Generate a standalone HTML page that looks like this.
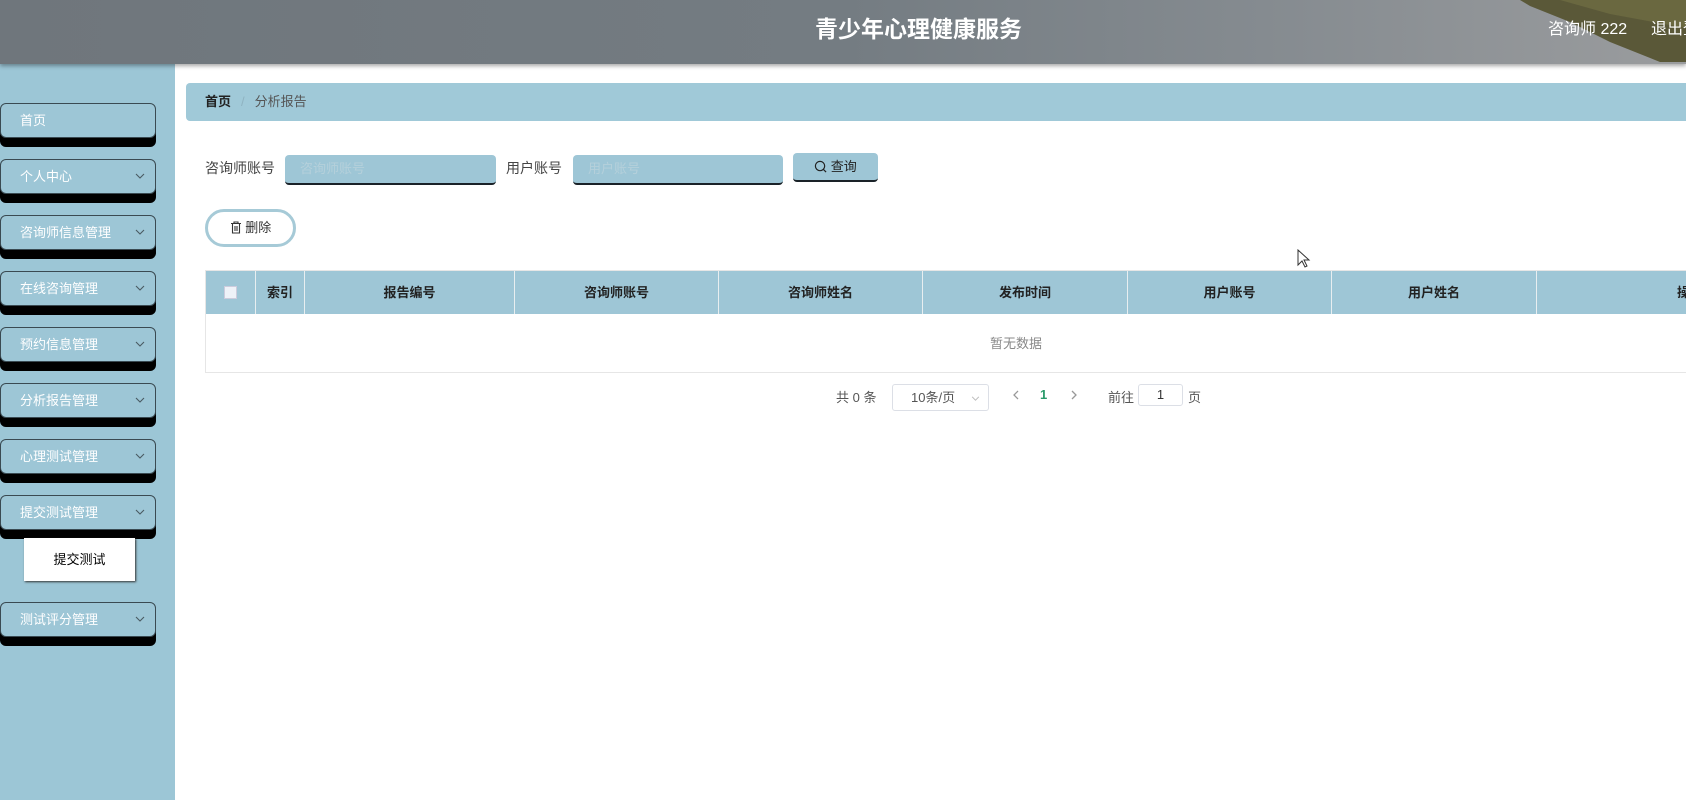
<!DOCTYPE html>
<html><head><meta charset="utf-8">
<style>
*{box-sizing:border-box;margin:0;padding:0}
body{width:1686px;height:800px;overflow:hidden;background:#fff;font-family:"Liberation Sans","Noto Sans CJK SC",sans-serif;font-size:13px;color:#333;position:relative}
.hdr{position:absolute;left:0;top:0;width:1686px;height:64px;background:linear-gradient(90deg,#6f767c 0%,#747c82 50%,#858b90 75%,#9a9c9e 100%);box-shadow:0 2px 4px rgba(0,0,0,.35);overflow:hidden;z-index:2}
.hdr .t{position:absolute;left:815px;top:10px;font-size:23px;font-weight:bold;color:#fff}
.hdr .u{position:absolute;left:1548px;top:15px;font-size:16px;color:#fff}
.hdr .o{position:absolute;left:1651px;top:15px;font-size:16px;color:#fff;white-space:nowrap}
.side{position:absolute;left:0;top:64px;width:175px;height:736px;background:#9cc6d6}
.mi{position:absolute;left:0;width:156px;height:35px;background:#9dc6d6;border:1px solid #3a4a52;border-radius:6px;box-shadow:0 9px 0 #000;color:#fff;font-size:13px;line-height:33px;padding-left:19px}
.mi svg{position:absolute;right:10px;top:13px}
.sub{position:absolute;left:24px;top:538px;width:111px;height:43px;background:#fff;box-shadow:1px 1px 2px #333;text-align:center;line-height:43px;font-size:13px;color:#000}
.bc{position:absolute;left:186px;top:83px;width:1500px;height:38px;background:#a0c9d8;border-radius:4px 0 0 4px;line-height:38px;padding-left:19px;font-size:13px}
.bc b{color:#222}.bc span{color:#8fb3c1;margin:0 10px}.bc i{font-style:normal;color:#555}
.lbl{position:absolute;top:158px;font-size:14px;color:#444}
.inp{position:absolute;top:155px;height:30px;background:#9ec6d6;border-radius:4px;border-bottom:2px solid #1a2228;color:#b5d0db;font-size:13px;line-height:28px;padding-left:15px}
.btnq{position:absolute;left:793px;top:153px;width:85px;height:29px;background:#9ec6d6;border-radius:4px;border-bottom:2px solid #1a2228;font-size:13px;line-height:28px;text-align:center;color:#222}
.del{position:absolute;left:205px;top:209px;width:91px;height:38px;border:3px solid #a6cad7;border-radius:20px;font-size:13px;line-height:32px;text-align:center;color:#333}
.tbl{position:absolute;left:205px;top:270px;width:1481px;height:103px;border:1px solid #e6e6e6;border-right:none;overflow:hidden}
.th{position:absolute;top:0;height:43px;background:#9ec6d6;border-right:1px solid #e8eef0;font-weight:bold;font-size:13px;color:#222;text-align:center;line-height:43px;white-space:nowrap}
.empty{position:absolute;left:0;top:43px;width:1620px;height:59px;line-height:59px;text-align:center;color:#888;font-size:13px}
.pg{position:absolute;top:386px;font-size:13px;color:#555}
</style></head><body>
<div class="hdr">
<svg width="1686" height="64" style="position:absolute;left:0;top:0">
<polygon points="1520,0 1686,0 1686,62 1660,62 1610,42 1570,22 1530,6" fill="#5a5838"/>
<polygon points="1560,0 1686,0 1686,28 1610,14" fill="#6a6840"/>
</svg>
<div class="t">青少年心理健康服务</div>
<div class="u">咨询师 222</div>
<div class="o">退出登录</div>
</div>
<div class="side"></div>
<div class="mi" style="top:103px">首页</div>
<div class="mi" style="top:159px">个人中心<svg width="10" height="6" viewBox="0 0 10 6"><path d="M1 1l4 4 4-4" fill="none" stroke="#4a5a62" stroke-width="1.1"/></svg></div>
<div class="mi" style="top:215px">咨询师信息管理<svg width="10" height="6" viewBox="0 0 10 6"><path d="M1 1l4 4 4-4" fill="none" stroke="#4a5a62" stroke-width="1.1"/></svg></div>
<div class="mi" style="top:271px">在线咨询管理<svg width="10" height="6" viewBox="0 0 10 6"><path d="M1 1l4 4 4-4" fill="none" stroke="#4a5a62" stroke-width="1.1"/></svg></div>
<div class="mi" style="top:327px">预约信息管理<svg width="10" height="6" viewBox="0 0 10 6"><path d="M1 1l4 4 4-4" fill="none" stroke="#4a5a62" stroke-width="1.1"/></svg></div>
<div class="mi" style="top:383px">分析报告管理<svg width="10" height="6" viewBox="0 0 10 6"><path d="M1 1l4 4 4-4" fill="none" stroke="#4a5a62" stroke-width="1.1"/></svg></div>
<div class="mi" style="top:439px">心理测试管理<svg width="10" height="6" viewBox="0 0 10 6"><path d="M1 1l4 4 4-4" fill="none" stroke="#4a5a62" stroke-width="1.1"/></svg></div>
<div class="mi" style="top:495px">提交测试管理<svg width="10" height="6" viewBox="0 0 10 6"><path d="M1 1l4 4 4-4" fill="none" stroke="#4a5a62" stroke-width="1.1"/></svg></div>
<div class="sub">提交测试</div>
<div class="mi" style="top:602px">测试评分管理<svg width="10" height="6" viewBox="0 0 10 6"><path d="M1 1l4 4 4-4" fill="none" stroke="#4a5a62" stroke-width="1.1"/></svg></div>

<div class="bc"><b>首页</b><span>/</span><i>分析报告</i></div>

<div class="lbl" style="left:205px">咨询师账号</div>
<div class="inp" style="left:285px;width:211px">咨询师账号</div>
<div class="lbl" style="left:506px">用户账号</div>
<div class="inp" style="left:573px;width:210px">用户账号</div>
<div class="btnq"><svg width="13" height="13" viewBox="0 0 14 14" style="vertical-align:-2px"><circle cx="6.5" cy="6.5" r="5" fill="none" stroke="#222" stroke-width="1.3"/><line x1="10" y1="10" x2="13" y2="13" stroke="#222" stroke-width="1.3"/></svg> 查询</div>

<div class="del"><svg width="12" height="13" viewBox="0 0 12 13" style="vertical-align:-2px"><path d="M1 2.5h10M4 2.5V1h4v1.5M2.5 2.5v9.5h7V2.5M5 5v5M7 5v5" fill="none" stroke="#333" stroke-width="1.1"/></svg> 删除</div>

<div class="tbl">
<div class="th" style="left:0;width:50px"><span style="display:inline-block;width:13px;height:13px;background:#eef2f8;border:1px solid #ccd;vertical-align:-2px"></span></div>
<div class="th" style="left:50px;width:49px">索引</div>
<div class="th" style="left:99px;width:210px">报告编号</div>
<div class="th" style="left:309px;width:204px">咨询师账号</div>
<div class="th" style="left:513px;width:204px">咨询师姓名</div>
<div class="th" style="left:717px;width:205px">发布时间</div>
<div class="th" style="left:922px;width:204px">用户账号</div>
<div class="th" style="left:1126px;width:205px">用户姓名</div>
<div class="th" style="left:1331px;width:300px;text-align:left;padding-left:140px;border-right:none">操作</div>
<div class="empty">暂无数据</div>
</div>

<div class="pg" style="left:836px;top:387px">共 0 条</div>
<div class="pg" style="left:892px;top:384px;width:97px;height:27px;border:1px solid #dcdfe6;border-radius:3px;line-height:25px;padding-left:18px">10条/页<svg width="9" height="5" viewBox="0 0 10 6" style="position:absolute;right:8px;top:11px"><path d="M1 1l4 4 4-4" fill="none" stroke="#bbb" stroke-width="1.2"/></svg></div>
<svg width="7" height="10" viewBox="0 0 7 10" style="position:absolute;left:1013px;top:390px"><path d="M5 1L1 5l4 4" fill="none" stroke="#999" stroke-width="1.3"/></svg>
<div class="pg" style="left:1040px;top:387px;color:#2a9a6a;font-weight:bold">1</div>
<svg width="7" height="10" viewBox="0 0 7 10" style="position:absolute;left:1070px;top:390px"><path d="M2 1l4 4-4 4" fill="none" stroke="#999" stroke-width="1.3"/></svg>
<div class="pg" style="left:1108px;top:387px">前往</div>
<div class="pg" style="left:1138px;top:384px;width:45px;height:22px;border:1px solid #dcdfe6;border-radius:3px;text-align:center;line-height:20px;color:#333">1</div>
<div class="pg" style="left:1188px;top:387px">页</div>

<svg width="14" height="20" style="position:absolute;left:1297px;top:249px"><path d="M1 1v15l4-4 3 6 2-1-3-6h5z" fill="#fff" stroke="#333" stroke-width="1"/></svg>
</body></html>
